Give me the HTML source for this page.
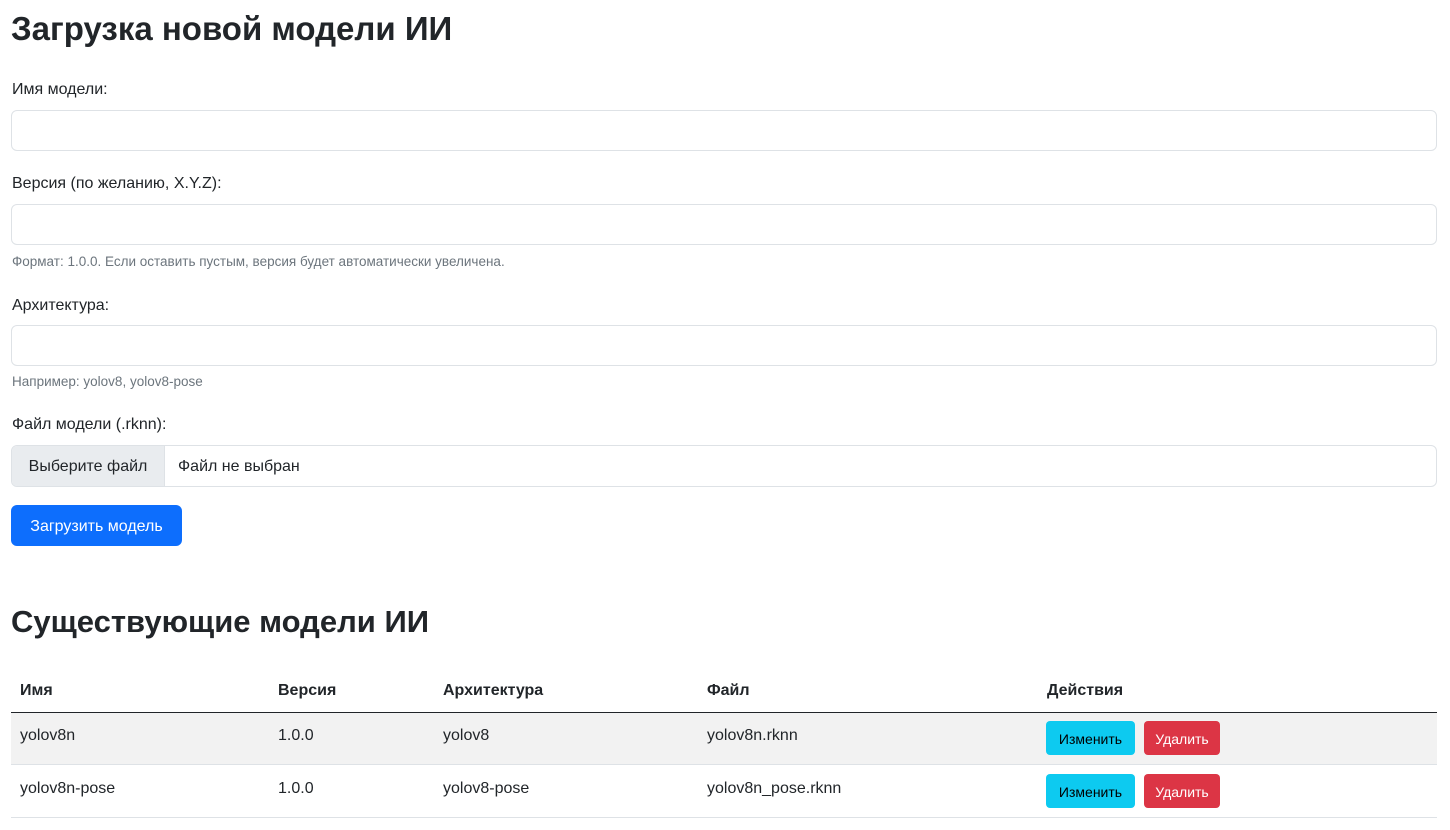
<!DOCTYPE html>
<html><head><meta charset="utf-8"><style>
body{margin:0;width:1450px;height:830px;background:#fff;font-family:"Liberation Sans",sans-serif;color:#212529;position:relative;overflow:hidden}
.a{position:absolute;white-space:nowrap}
h1,h2{margin:0;font-weight:bold}
.lbl{font-size:16px;left:12px}
.in{left:11px;width:1426px;height:39px;border:1px solid #dee2e6;border-radius:6px;box-sizing:border-box;background:#fff}
.hlp{font-size:13.5px;color:#6c757d;left:12px}
.btn{border-radius:4px;font-size:14px;text-align:center;box-sizing:border-box}
.th{font-weight:bold;font-size:16px}
.td{font-size:16px}
</style></head><body>
<h1 class="a" style="left:11px;top:10px;font-size:33px">Загрузка новой модели ИИ</h1>
<div class="a lbl" style="top:81px">Имя модели:</div>
<div class="a in" style="top:110px;height:41px"></div>
<div class="a lbl" style="top:175px">Версия (по желанию, X.Y.Z):</div>
<div class="a in" style="top:204px;height:41px"></div>
<div class="a hlp" style="top:254px">Формат: 1.0.0. Если оставить пустым, версия будет автоматически увеличена.</div>
<div class="a lbl" style="top:297px">Архитектура:</div>
<div class="a in" style="top:325px;height:41px"></div>
<div class="a hlp" style="top:374px">Например: yolov8, yolov8-pose</div>
<div class="a lbl" style="top:416px">Файл модели (.rknn):</div>
<div class="a in" style="top:445px;height:42px;overflow:hidden">
<div class="a" style="left:0;top:0;width:152px;height:40px;background:#e9ecef;border-right:1px solid #dee2e6;font-size:16px;line-height:42px;text-align:center">Выберите файл</div>
<div class="a" style="left:166px;top:0;line-height:42px;font-size:16px">Файл не выбран</div></div>
<div class="a btn" style="left:11px;top:505px;width:171px;height:41px;background:#0d6efd;color:#fff;font-size:16px;line-height:43px;border-radius:6px">Загрузить модель</div>
<h2 class="a" style="left:11px;top:604px;font-size:31px">Существующие модели ИИ</h2>
<div class="a th" style="left:20px;top:682px">Имя</div>
<div class="a th" style="left:278px;top:682px">Версия</div>
<div class="a th" style="left:443px;top:682px">Архитектура</div>
<div class="a th" style="left:707px;top:682px">Файл</div>
<div class="a th" style="left:1047px;top:682px">Действия</div>
<div class="a" style="left:11px;top:712px;width:1426px;height:1px;background:#212529"></div>
<div class="a" style="left:11px;top:713px;width:1426px;height:51px;background:#f2f2f2"></div>
<div class="a" style="left:11px;top:764px;width:1426px;height:1px;background:#dee2e6"></div>
<div class="a" style="left:11px;top:817px;width:1426px;height:1px;background:#dee2e6"></div>
<div class="a td" style="left:20px;top:727px">yolov8n</div>
<div class="a td" style="left:278px;top:727px">1.0.0</div>
<div class="a td" style="left:443px;top:727px">yolov8</div>
<div class="a td" style="left:707px;top:727px">yolov8n.rknn</div>
<div class="a td" style="left:20px;top:780px">yolov8n-pose</div>
<div class="a td" style="left:278px;top:780px">1.0.0</div>
<div class="a td" style="left:443px;top:780px">yolov8-pose</div>
<div class="a td" style="left:707px;top:780px">yolov8n_pose.rknn</div>
<div class="a btn" style="left:1046px;top:721px;width:89px;height:34px;line-height:36px;background:#0dcaf0;color:#000">Изменить</div>
<div class="a btn" style="left:1144px;top:721px;width:76px;height:34px;line-height:36px;background:#dc3545;color:#fff">Удалить</div>
<div class="a btn" style="left:1046px;top:774px;width:89px;height:34px;line-height:36px;background:#0dcaf0;color:#000">Изменить</div>
<div class="a btn" style="left:1144px;top:774px;width:76px;height:34px;line-height:36px;background:#dc3545;color:#fff">Удалить</div>
</body></html>
